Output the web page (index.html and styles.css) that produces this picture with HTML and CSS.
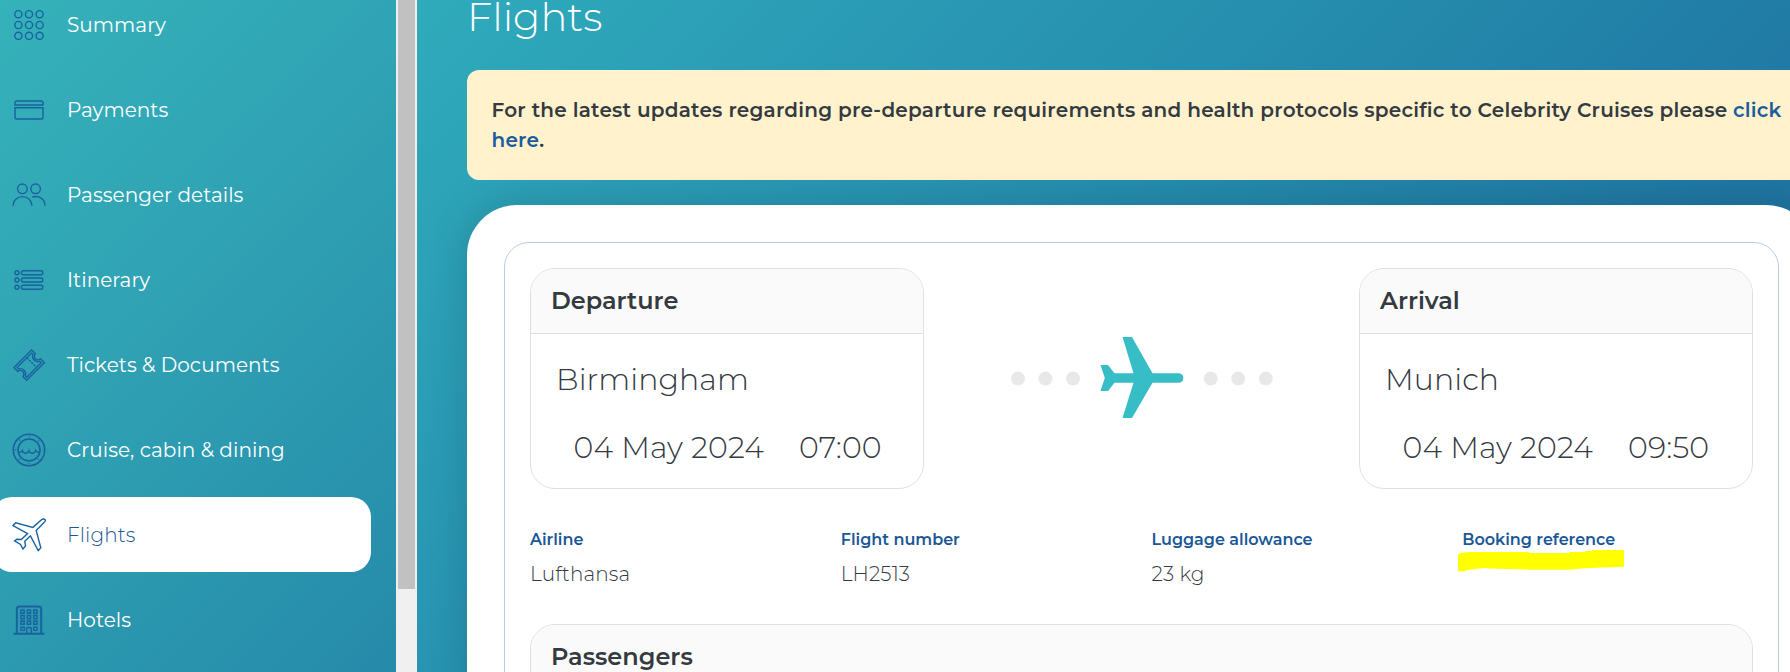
FILE: index.html
```html
<!DOCTYPE html>
<html lang="en">
<head>
<meta charset="utf-8">
<title>Flights</title>
<link rel="stylesheet" href="styles.css">
</head>
<body>
<div class="app">
  <aside class="sidebar">
    <nav class="nav">
      <a class="nav-item"><svg class="icon" viewBox="0 0 36 36"><g><circle cx="7.4" cy="7.2" r="3.6"/><circle cx="18" cy="7.2" r="3.6"/><circle cx="28.6" cy="7.2" r="3.6"/><circle cx="7.4" cy="18" r="3.6"/><circle cx="18" cy="18" r="3.6"/><circle cx="28.6" cy="18" r="3.6"/><circle cx="7.4" cy="28.8" r="3.6"/><circle cx="18" cy="28.8" r="3.6"/><circle cx="28.6" cy="28.8" r="3.6"/></g></svg><span>Summary</span></a>
      <a class="nav-item"><svg class="icon" viewBox="0 0 36 36"><path d="M4 13V10.8Q4 9 5.8 9H30.2Q32 9 32 10.8V13ZM4 15.8H32V25.2Q32 27 30.2 27H5.8Q4 27 4 25.2Z"/></svg><span>Payments</span></a>
      <a class="nav-item"><svg class="icon" viewBox="0 0 36 36"><circle cx="11.4" cy="11.8" r="4.8"/><circle cx="24.6" cy="11.8" r="4.8"/><path d="M2 28.8A9.5 9.2 0 0 1 21 28.8M21 20.2C28 17.8 34 22 34 28.8"/></svg><span>Passenger details</span></a>
      <a class="nav-item"><svg class="icon" viewBox="0 0 36 36"><circle cx="6" cy="10.7" r="2"/><circle cx="6" cy="18" r="2"/><circle cx="6" cy="25.3" r="2"/><rect x="10.4" y="8.7" width="21.4" height="4" rx="2"/><rect x="10.4" y="16" width="21.4" height="4" rx="2"/><rect x="10.4" y="23.3" width="21.4" height="4" rx="2"/></svg><span>Itinerary</span></a>
      <a class="nav-item"><svg class="icon" viewBox="0 0 36 36"><g transform="rotate(-45 18 18)"><path d="M5.5 9.2H30.5V14.6A3.6 3.6 0 0 0 30.5 21.8V27.2H5.5V21.8A3.6 3.6 0 0 0 5.5 14.6Z"/><path d="M7.8 11.4H28.2V13.4A5.3 5.3 0 0 0 28.2 23V25H7.8V23A5.3 5.3 0 0 0 7.8 13.4Z"/><path stroke-dasharray="2.2 1" d="M21.6 11.4V25"/></g></svg><span>Tickets &amp; Documents</span></a>
      <a class="nav-item"><svg class="icon" viewBox="0 0 36 36"><g stroke-width="1.6"><circle cx="18" cy="18" r="15.7"/><circle cx="18" cy="18" r="11"/></g><circle class="rivets" cx="18" cy="18" r="13.5"/><path d="M8 20.2Q10.6 20.4 11.4 18.6Q12 21.2 14.6 21.2T18 18.6Q18.6 21.2 21.2 21.2T24.6 18.6Q25.4 20.4 28 20.2"/></svg><span>Cruise, cabin &amp; dining</span></a>
      <a class="nav-item nav-item--active"><svg class="icon" viewBox="0 0 36 36"><path d="M2 8.5L4.7 5.9L21.8 10.4L30.2 3Q32.4 1.2 33.8 2.4T33 5.6L25.2 13.5L29.8 30.8L27.2 33.6L19.4 18.8L13.8 24.2L14.5 28.9L12 32L9.5 27.5L3.6 23.9L5.8 22.2L10.2 22.5L16.6 16.6Z"/></svg><span>Flights</span></a>
      <a class="nav-item"><svg class="icon" viewBox="0 0 36 36"><path stroke-width="2" d="M2.5 31.8H33.5M5.8 31V7.2Q5.8 4.5 8.5 4.5H27.5Q30.2 4.5 30.2 7.2V31"/><path d="M9.9 8h3.3v3.2H9.9zM16.3 8h3.3v3.2h-3.3zM22.7 8H26v3.2h-3.3zM9.9 13.5h3.3v3.2H9.9zM16.3 13.5h3.3v3.2h-3.3zM22.7 13.5H26v3.2h-3.3zM9.9 19h3.3v3.2H9.9zM16.3 19h3.3v3.2h-3.3zM22.7 19H26v3.2h-3.3zM9.9 25.2h3.3v3.2H9.9zM22.7 25.2H26v3.2h-3.3zM15.7 31V26.5Q15.7 25.5 16.7 25.5H19.3Q20.3 25.5 20.3 26.5V31"/></svg><span>Hotels</span></a>
    </nav>
    <div class="scrollbar"><div class="scrollbar-thumb"></div></div>
  </aside>
  <main class="main">
    <h1 class="title">Flights</h1>
    <p class="notice">For the latest updates regarding pre-departure requirements and health protocols specific to Celebrity Cruises please <a class="link">click here</a>.</p>
    <section class="card">
      <div class="flight">
        <div class="route">
          <article class="box stop">
            <h2 class="box-head">Departure</h2>
            <div class="stop-body">
              <div class="city">Birmingham</div>
              <div class="when"><span>04 May 2024</span><span>07:00</span></div>
            </div>
          </article>
          <svg class="path" viewBox="0 0 264 82">
            <g fill="#e8e8e8"><circle cx="8" cy="41.6" r="7"/><circle cx="35.5" cy="41.6" r="7"/><circle cx="63" cy="41.6" r="7"/><circle cx="200.7" cy="41.6" r="7"/><circle cx="228.2" cy="41.6" r="7"/><circle cx="255.8" cy="41.6" r="7"/></g>
            <path fill="#37bdc5" d="M112.5 0H122L142.5 36.2H169Q173.3 36.8 173.3 41T169 45.8H142.5L122 81H112.5L123.5 45.8H104.5L98 54H90.5L94.8 41L90.5 28H98L104.5 36.2H123.5Z"/>
          </svg>
          <article class="box stop">
            <h2 class="box-head">Arrival</h2>
            <div class="stop-body">
              <div class="city">Munich</div>
              <div class="when"><span>04 May 2024</span><span>09:50</span></div>
            </div>
          </article>
        </div>
        <dl class="details">
          <div class="detail"><dt>Airline</dt><dd>Lufthansa</dd></div>
          <div class="detail"><dt>Flight number</dt><dd>LH2513</dd></div>
          <div class="detail"><dt>Luggage allowance</dt><dd>23 kg</dd></div>
          <div class="detail"><dt>Booking reference</dt><dd></dd>
            <svg class="marker" viewBox="0 0 166 22"><path fill="#ff0" d="M0 5L2 3L11 2H71V3H111V2H127V1H134V0H166V16.5L162 17L131 18L109 19.7H72L32 18.5L25 18L9 20L6 21.2H0Z"/></svg>
          </div>
        </dl>
        <section class="box passengers"><h2 class="box-head">Passengers</h2></section>
      </div>
    </section>
  </main>
</div>
</body>
</html>
```
FILE: styles.css
```css
* { box-sizing: border-box; }
body, h1, h2, p, dl, dd { margin: 0; }
body {
  font-family: Montserrat, Inter, sans-serif;
  font-size: 20px;
  color: #343a3f;
  overflow: hidden;
}
.app { display: flex; height: 672px; overflow: hidden; }

.sidebar {
  flex: 0 0 417px;
  display: flex;
  justify-content: space-between;
  background: linear-gradient(135deg, #35b2ba 0%, #2fa1b3 45%, #2589a9 100%);
}
.nav {
  display: flex;
  flex-direction: column;
  gap: 10px;
  width: 379px;
  margin: -13px 0 0 -8px;
}
.nav-item {
  flex: 0 0 75px;
  display: flex;
  align-items: center;
  gap: 20px;
  padding-left: 19px;
  border-radius: 20px;
  color: #fff;
  letter-spacing: .04px;
}
.nav-item--active { background: #fff; color: #1a5796; font-weight: 300; letter-spacing: .12px; }
.icon { width: 36px; height: 36px; fill: none; stroke: #1a629f; stroke-width: 1.4; }
.rivets { stroke-dasharray: 1 9.6; stroke-dashoffset: .5; }

.scrollbar { width: 21px; padding: 0 2px; background: #f0f0f0; }
.scrollbar-thumb { height: 589px; background: #c1c1c1; }

.main {
  flex: 1;
  min-width: 0;
  padding-left: 50px;
  background: linear-gradient(135deg, #2fabbb 0%, #2996b3 30%, #2489ab 50%, #1f76a3 75%, #1b6699 100%);
}
.title {
  margin: -7px 0 29px;
  font-size: 40px;
  font-weight: 300;
  line-height: 48px;
  color: #fff;
}
.notice {
  width: 1349px;
  padding: 25px 25px 25px 24.5px;
  border-radius: 12px;
  background: #fff2cd;
  font-weight: 600;
  line-height: 30px;
  letter-spacing: .22px;
}
.link { color: #1a5c9c; }

.card {
  width: 1349px;
  height: 700px;
  margin-top: 25px;
  padding: 37px;
  border-radius: 50px;
  background: #fff;
  box-shadow: 0 0 40px rgba(0, 0, 0, .16);
}
.flight { height: 640px; padding: 25px; border: 1px solid #b9cde1; border-radius: 25px; }
.route { display: flex; align-items: center; justify-content: space-between; }
.path { width: 264px; height: 82px; margin-bottom: 2px; }

.box { border: 1px solid #dee0e5; border-radius: 25px; overflow: hidden; }
.box-head {
  height: 65px;
  padding-left: 20px;
  border-bottom: 1px solid #dee0e5;
  background: #fafafa;
  font-size: 24px;
  font-weight: 600;
  line-height: 64px;
}
.stop { width: 394px; height: 221px; }
.stop-body { padding: 28px 0 0 25px; font-size: 30px; font-weight: 300; line-height: 36px; }
.city { letter-spacing: .1px; }
.when { display: grid; grid-template-columns: 225.5px auto; margin: 32px 0 0 17.5px; letter-spacing: .2px; }

.details {
  display: grid;
  grid-template-columns: repeat(4, 1fr);
  column-gap: 20px;
  margin: 33px 0 32px;
  line-height: 35px;
}
.detail { position: relative; height: 70px; }
.detail dt { font-size: 16px; font-weight: 600; color: #1a5796; }
.detail dd { font-weight: 300; letter-spacing: .12px; }
.marker { position: absolute; left: -4px; top: 28px; width: 166px; height: 22px; }
.passengers { height: 200px; }
```
